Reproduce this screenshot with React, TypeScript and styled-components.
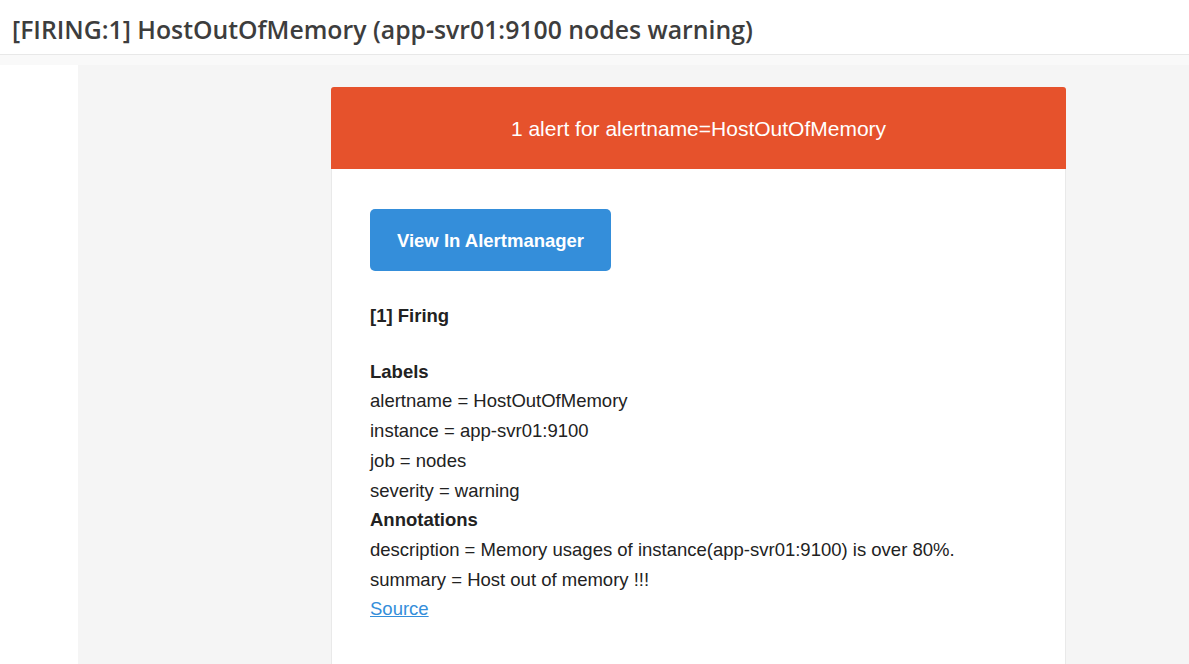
import styled, { createGlobalStyle } from 'styled-components';

const labels: [string, string][] = [
	['alertname', 'HostOutOfMemory'],
	['instance', 'app-svr01:9100'],
	['job', 'nodes'],
	['severity', 'warning'],
];

const annotations: [string, string][] = [
	['description', 'Memory usages of instance(app-svr01:9100) is over 80%.'],
	['summary', 'Host out of memory !!!'],
];

const App = () => {
	return (
		<>
			<GlobalStyle />
			<PageLayout>
				<SubjectBar>
					<Subject>[FIRING:1] HostOutOfMemory (app-svr01:9100 nodes warning)</Subject>
				</SubjectBar>
				<Strip />
				<MailRow>
					<Gutter />
					<MailBody>
						<Card>
							<CardHeader>1 alert for alertname=HostOutOfMemory</CardHeader>
							<CardContent>
								<ActionButton href="#">View In Alertmanager</ActionButton>
								<SectionTitle>[1] Firing</SectionTitle>
								<GroupTitle>Labels</GroupTitle>
								{labels.map(([key, value]) => (
									<Line key={key}>
										{key} = {value}
									</Line>
								))}
								<GroupTitle>Annotations</GroupTitle>
								{annotations.map(([key, value]) => (
									<Line key={key}>
										{key} = {value}
									</Line>
								))}
								<SourceLink href="#">Source</SourceLink>
							</CardContent>
						</Card>
					</MailBody>
				</MailRow>
			</PageLayout>
		</>
	);
};

const GlobalStyle = createGlobalStyle`
	html, body {
		margin: 0;
		padding: 0;
		background: #ffffff;
		overflow: hidden;
	}
	* {
		box-sizing: border-box;
	}
`;

const PageLayout = styled.div`
	display: flex;
	flex-direction: column;
	height: 664px;
	overflow: hidden;
`;
const SubjectBar = styled.div`
	flex-shrink: 0;
	height: 55px;
	display: flex;
	align-items: center;
	padding: 3px 12px 0;
	border-bottom: 1px solid #e8e8e8;
	background: #ffffff;
`;
const Subject = styled.h1`
	margin: 0;
	font-family: 'Open Sans', sans-serif;
	font-size: 24.8px;
	font-weight: 600;
	color: #3d3d3d;
	white-space: nowrap;
`;
const Strip = styled.div`
	flex-shrink: 0;
	height: 10px;
	background: #f9f9f9;
`;
const MailRow = styled.div`
	flex: 1 0 auto;
	display: flex;
`;
const Gutter = styled.div`
	width: 78px;
	background: #ffffff;
`;
const MailBody = styled.div`
	flex: 1;
	background: #f5f5f5;
	padding: 22px 0 0 253px;
`;
const Card = styled.div`
	width: 735px;
	min-height: 700px;
	background: #ffffff;
	border: 1px solid #e9e9e9;
	border-radius: 3px;
	font-family: 'Liberation Sans', Arial, sans-serif;
	color: #222222;
`;
const CardHeader = styled.div`
	height: 82px;
	margin: -1px -1px 0;
	background: #e6522c;
	border-radius: 3px 3px 0 0;
	display: flex;
	align-items: center;
	justify-content: center;
	color: #ffffff;
	font-size: 21px;
	padding-top: 1px;
`;
const CardContent = styled.div`
	display: flex;
	flex-direction: column;
	align-items: flex-start;
	padding: 40px 38px 60px;
	font-size: 18.5px;
	line-height: 29.7px;
`;
const ActionButton = styled.a`
	display: flex;
	align-items: center;
	justify-content: center;
	width: 241px;
	height: 62px;
	padding-top: 2px;
	background: #348eda;
	border-radius: 5px;
	color: #ffffff;
	font-weight: bold;
	font-size: 18.5px;
	text-decoration: none;
`;
const SectionTitle = styled.strong`
	margin: 30px 0 26px;
	font-weight: bold;
`;
const GroupTitle = styled.strong`
	font-weight: bold;
`;
const Line = styled.div``;
const SourceLink = styled.a`
	color: #348eda;
	text-decoration: underline;
`;

export default App;
